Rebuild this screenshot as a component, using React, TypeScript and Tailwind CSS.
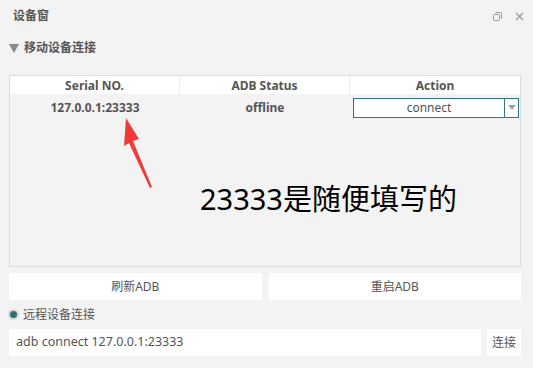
import React from "react";

const font = { fontFamily: '"Noto Sans", "Noto Sans CJK SC", sans-serif' };

const App = () => {
  return (
    <div
      className="w-[533px] h-[368px] bg-[#f3f3f3] text-[#555] overflow-hidden flex flex-col pl-[9px] pr-[12px]"
      style={font}
    >
      {/* title bar */}
      <div className="flex items-center h-[32px] pl-[4px] -mr-[3px]">
        <span className="text-[12px] font-bold leading-none">设备窗</span>
        <div className="ml-auto flex items-center gap-[13px] text-[#999]">
          <svg width="9" height="9" viewBox="0 0 9 9">
            <rect x="0.5" y="2.5" width="6" height="6" rx="1" fill="none" stroke="#999" />
            <path d="M2.5 0.5h5a1 1 0 0 1 1 1v5" fill="none" stroke="#999" />
          </svg>
          <svg width="9" height="9" viewBox="0 0 9 9">
            <path d="M1 1l7 7M8 1l-7 7" stroke="#999" strokeWidth="1.3" />
          </svg>
        </div>
      </div>

      {/* section header */}
      <div className="flex items-center gap-[5px] h-[31px] pt-[1px]">
        <svg width="10" height="9" viewBox="0 0 10 9">
          <path d="M0 0h10L5 9z" fill="#8a8a8a" />
        </svg>
        <span className="text-[12px] font-bold">移动设备连接</span>
      </div>

      {/* device table */}
      <div className="mt-[12px] h-[192px] border border-[#dcdcdc] flex flex-col relative">
        <div className="grid grid-cols-3 h-[18px] bg-white text-[12px] font-bold leading-[20px] text-center">
          <div className="border-r border-[#ececec]">Serial NO.</div>
          <div className="border-r border-[#ececec]">ADB Status</div>
          <div>Action</div>
        </div>
        <div className="grid grid-cols-3 h-[27px] items-center text-[12px] font-bold text-center">
          <div>127.0.0.1:23333</div>
          <div>offline</div>
          <div className="pl-[3px] pr-[1px]">
            <div className="h-[20px] border border-[#2e7a7a] bg-white flex">
              <span className="flex-1 font-normal leading-[18px]">connect</span>
              <span className="w-[14px] border-l border-[#2e7a7a] flex items-center justify-center">
                <svg width="8" height="5" viewBox="0 0 8 5">
                  <path d="M0 0h8L4 5z" fill="#a0a0a0" />
                </svg>
              </span>
            </div>
          </div>
        </div>

        {/* annotation arrow */}
        <svg
          className="absolute left-[105px] top-[41px]"
          width="50"
          height="75"
          viewBox="0 0 50 75"
        >
          <path d="M11 1 L24 22 L18 24 L37 70 L35 71 L14 26 L9 29 Z" fill="#f03a3a" />
        </svg>

        <div className="absolute left-[190px] top-[108px] text-[29px] text-black leading-none">
          23333是随便填写的
        </div>
      </div>

      {/* buttons */}
      <div className="mt-[6px] flex gap-[7px]">
        <button className="flex-1 h-[27px] bg-white text-[12px]">刷新ADB</button>
        <button className="flex-1 h-[27px] bg-white text-[12px]">重启ADB</button>
      </div>

      {/* remote */}
      <div className="flex items-center gap-[6px] h-[29px] pl-[1px]">
        <span className="w-[7px] h-[7px] rounded-full bg-[#2e6f74] ring-2 ring-[#d8d8d8]" />
        <span className="text-[12px]">远程设备连接</span>
      </div>
      <div className="flex gap-[6px]">
        <div className="flex-1 h-[27px] bg-white rounded-[3px] flex items-center pl-[7px] text-[12.5px]">
          adb connect 127.0.0.1:23333
        </div>
        <button className="w-[34px] h-[27px] bg-white text-[12px]">连接</button>
      </div>
    </div>
  );
};

export default App;
